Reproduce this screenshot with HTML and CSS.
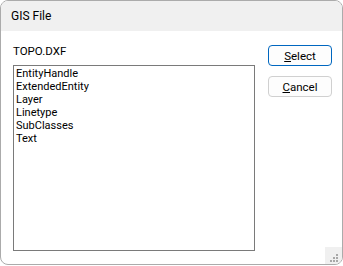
FILE: index.html
```html
<!DOCTYPE html>
<html lang="en">
<head>
  <meta charset="UTF-8" />
  <title>GIS File</title>
  <link rel="stylesheet" href="styles.css">
</head>
<body>
  <div class="window">
    <div class="titlebar">GIS File</div>

    <div class="content">
      <div class="main">
        <div class="label">TOPO.DXF</div>
        <div class="listbox">
          <div class="item">EntityHandle</div>
          <div class="item">ExtendedEntity</div>
          <div class="item">Layer</div>
          <div class="item">Linetype</div>
          <div class="item">SubClasses</div>
          <div class="item">Text</div>
        </div>
      </div>

      <div class="buttons">
        <button class="btn btn-default"><u>S</u>elect</button>
        <button class="btn"><u>C</u>ancel</button>
      </div>
    </div>

    <div class="grip">
      <svg width="17" height="17" viewBox="0 0 17 17">
        <rect x="11" y="7" width="2" height="2" fill="#a8a8a8"/>
        <rect x="8" y="10" width="2" height="2" fill="#a8a8a8"/>
        <rect x="11" y="10" width="2" height="2" fill="#a8a8a8"/>
        <rect x="5" y="13" width="2" height="2" fill="#a8a8a8"/>
        <rect x="8" y="13" width="2" height="2" fill="#a8a8a8"/>
        <rect x="11" y="13" width="2" height="2" fill="#a8a8a8"/>
      </svg>
    </div>
  </div>
</body>
</html>
```

FILE: styles.css
```css
body {
  margin: 0;
  background: #fff;
  font-family: Roboto, 'Noto Sans', sans-serif;
  font-size: 11.5px;
  color: #000;
}

.window {
  position: relative;
  box-sizing: border-box;
  width: 343px;
  height: 265px;
  border: 1px solid #ababab;
  border-radius: 8px;
  background: #fff;
  overflow: hidden;
}

.titlebar {
  height: 30px;
  line-height: 31px;
  padding-left: 10px;
  background: #f0f0f0;
  font-size: 12px;
}

.content {
  display: flex;
  padding: 13px 0 0 12px;
}

.main {
  width: 242px;
}

.label {
  line-height: 15px;
  margin-bottom: 6px;
}

.listbox {
  box-sizing: border-box;
  height: 186px;
  border: 1px solid #7a7a7a;
  padding: 1px 2px;
}

.item {
  font-size: 11px;
  line-height: 13px;
  white-space: nowrap;
}

.buttons {
  display: flex;
  flex-direction: column;
  gap: 10px;
  margin-left: 13px;
  padding-top: 1px;
}

.btn {
  box-sizing: border-box;
  width: 64px;
  height: 21px;
  padding: 0;
  border: 1px solid #d0d0d0;
  border-radius: 4px;
  background: #fdfdfd;
  font-family: inherit;
  font-size: 11.5px;
  color: #000;
}

.btn-default {
  border-color: #0067c0;
}

.grip {
  position: absolute;
  right: 0;
  bottom: 0;
  width: 17px;
  height: 17px;
  background: #f0f0f0;
}

.grip svg {
  display: block;
}
```
